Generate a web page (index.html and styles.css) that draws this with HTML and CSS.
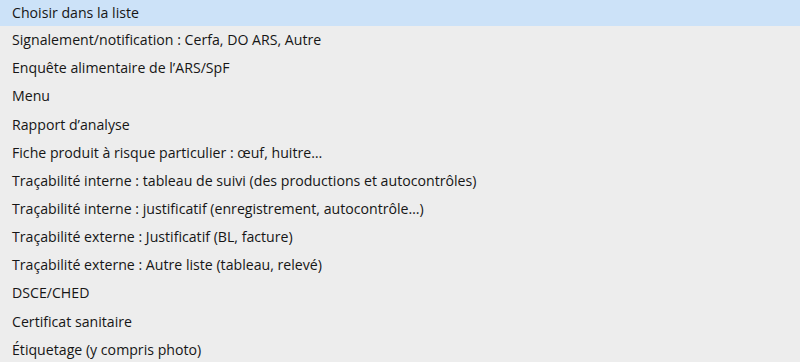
FILE: index.html
```html
<!DOCTYPE html>
<html lang="fr">
<head>
<meta charset="utf-8">
<title>Liste</title>
<link rel="stylesheet" href="styles.css">
</head>
<body>
<ul class="list">
  <li class="opt opt--active">Choisir dans la liste</li>
  <li class="opt">Signalement/notification : Cerfa, DO ARS, Autre</li>
  <li class="opt">Enquête alimentaire de l’ARS/SpF</li>
  <li class="opt">Menu</li>
  <li class="opt">Rapport d’analyse</li>
  <li class="opt">Fiche produit à risque particulier : œuf, huitre…</li>
  <li class="opt">Traçabilité interne : tableau de suivi (des productions et autocontrôles)</li>
  <li class="opt">Traçabilité interne : justificatif (enregistrement, autocontrôle…)</li>
  <li class="opt">Traçabilité externe : Justificatif (BL, facture)</li>
  <li class="opt">Traçabilité externe : Autre liste (tableau, relevé)</li>
  <li class="opt">DSCE/CHED</li>
  <li class="opt">Certificat sanitaire</li>
  <li class="opt">Étiquetage (y compris photo)</li>
</ul>
</body>
</html>
```
FILE: styles.css
```css
html, body {
  margin: 0;
  padding: 0;
  background: #ededed;
  overflow: hidden;
}
.list {
  list-style: none;
  margin: 0;
  padding: 0;
  font-family: "Open Sans", "Noto Sans", sans-serif;
  font-size: 14.15px;
  font-weight: 500;
  color: #161616;
}
.opt {
  height: 28.17px;
  box-sizing: border-box;
  display: flex;
  align-items: center;
  padding: 0 0 1px 12px;
  white-space: nowrap;
}
.opt--active {
  height: 26px;
  padding-bottom: 2px;
  background: #cce2f8;
}
```
